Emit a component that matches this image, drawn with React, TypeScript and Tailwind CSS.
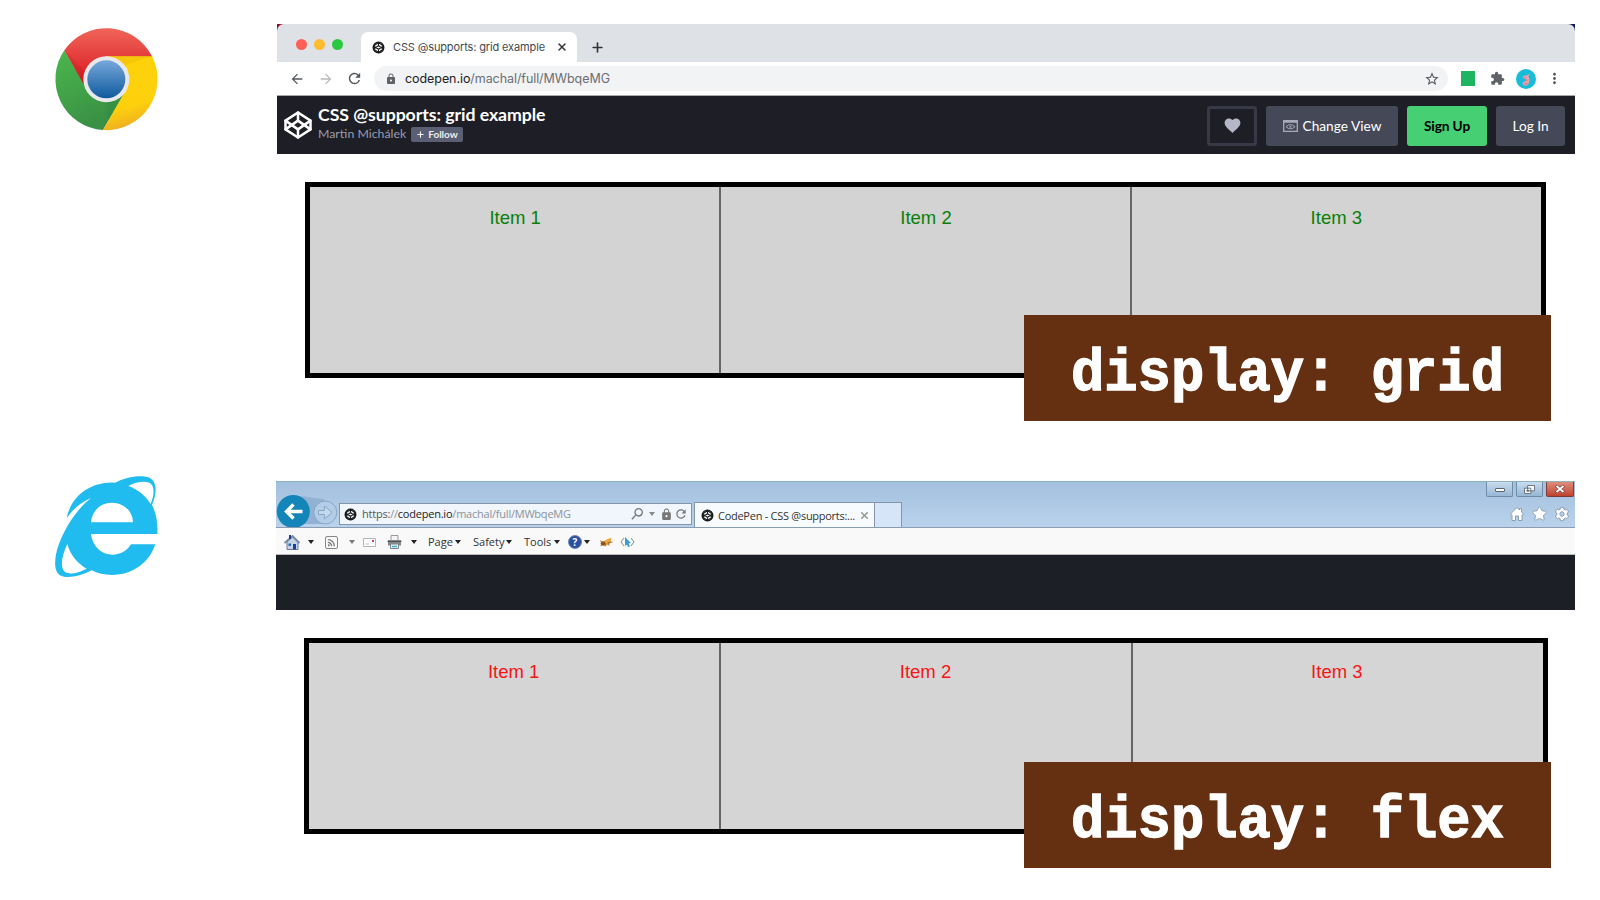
import type { ReactNode } from "react";
import { Codepen, Plus, X } from "lucide-react";
import { FaCog, FaStar } from "react-icons/fa";
import {
  MdArrowBack,
  MdArrowForward,
  MdExtension,
  MdFavorite,
  MdLock,
  MdMoreVert,
  MdRefresh,
  MdRssFeed,
  MdSearch,
  MdStarBorder,
} from "react-icons/md";

function ChromeLogo() {
  return (
    <svg viewBox="0 0 390 390" className="block size-[130px]">
      <defs>
        <linearGradient id="red" x1="0" y1="0" x2="0" y2="1">
          <stop offset="0" stopColor="#f0655a" />
          <stop offset="1" stopColor="#d9161f" />
        </linearGradient>
        <linearGradient id="green" x1="0" y1="0" x2="0.4" y2="1">
          <stop offset="0" stopColor="#4cb74c" />
          <stop offset="1" stopColor="#389044" />
        </linearGradient>
        <linearGradient id="yellow" x1="0" y1="0" x2="0.2" y2="1">
          <stop offset="0.1" stopColor="#fdd20a" />
          <stop offset="0.75" stopColor="#fdd00c" />
          <stop offset="1" stopColor="#efb022" />
        </linearGradient>
        <linearGradient id="blue" x1="0" y1="0" x2="0" y2="1">
          <stop offset="0" stopColor="#77a8dc" />
          <stop offset="1" stopColor="#0f5a9c" />
        </linearGradient>
      </defs>
      <path d="M73 106 A153 153 0 0 0 189 345 L260 222 L131 205 Z" fill="url(#green)" />
      <path d="M336 123 A153 153 0 0 1 189 345 L252 235 L262 160 L199 123 Z" fill="url(#yellow)" />
      <path d="M73 106 A153 153 0 0 1 336 124 L199 124 L131 208 Z" fill="url(#red)" />
      <path d="M210 124 H336 L258 149 Z" fill="#ecb80c" opacity="0.45" />
      <path d="M199 260 L252 236 L205 318 Z" fill="#2c7c3a" opacity="0.2" />
      <path d="M73 106 L131 208 L136 172 Z" fill="#b00f1c" opacity="0.2" />
      <circle cx="199" cy="193" r="69" fill="#e9e9ec" />
      <circle cx="199" cy="193" r="57" fill="url(#blue)" />
    </svg>
  );
}

function ExplorerLogo() {
  return (
    <svg viewBox="0 0 390 390" className="block size-[130px]">
      <path
        fill="#20bcef"
        fillRule="evenodd"
        d="M352 222 H153 C157 260 185 284 217 284 C242 284 262 272 273 253 H346 C328 308 278 345 216 345 C193 345 172 340 155 331 C125 347 95 353 72 350 C45 345 42 318 48 283 C58 232 100 155 153 114 C120 128 98 150 80 174 C93 110 150 64 225 68 C255 52 300 43 325 52 C352 62 352 98 336 135 C349 160 354 190 352 222 Z
        M153 187 C155 155 180 128 215 128 C250 128 278 152 279 187 Z
        M265 78 C295 63 325 61 336 75 C344 88 341 110 332 132 C315 105 292 88 265 78 Z
        M82 252 C90 282 110 309 140 326 C110 342 82 345 71 332 C60 315 67 285 82 252 Z"
      />
    </svg>
  );
}

function Favicon() {
  return (
    <svg viewBox="0 0 13 13" className="size-[13px] shrink-0 text-[#1a1a1a]">
      <circle cx="6.500" cy="6.500" r="5.300" fill="none" stroke="currentColor" strokeWidth="1.300" />
      <path
        d="M6.500 1.500 L11.500 5 V8 L6.500 11.500 L1.500 8 V5 Z M1.500 5 L6.500 8.300 L11.500 5 M1.500 8 L6.500 4.700 L11.500 8 M6.500 1.500 V4.700 M6.500 8.300 V11.500"
        fill="none"
        stroke="currentColor"
        strokeWidth="1.100"
      />
    </svg>
  );
}

function Cells({ look }: { look: string }) {
  return (
    <div className={`grid h-full w-full grid-cols-3 border-[5px] border-black text-center text-[18.5px] leading-[23px] ${look}`}>
      <div>Item 1</div>
      <div className="-ml-px border-l-2 border-[#666]">Item 2</div>
      <div className="-ml-px border-l-2 border-[#666]">Item 3</div>
    </div>
  );
}

function Label({ children }: { children: ReactNode }) {
  return (
    <div className="flex h-[106px] w-[527px] items-center justify-center bg-[#643011] pt-[13px] text-white">
      <span
        className="block origin-center scale-y-[1.08] font-['Liberation_Mono',monospace] text-[55.5px] leading-none font-bold whitespace-pre"
        style={{ WebkitTextStroke: "1.2px white" }}
      >
        {children}
      </span>
    </div>
  );
}

function Center({ w, children }: { w: string; children?: ReactNode }) {
  return <div className={`flex shrink-0 items-center justify-center ${w}`}>{children}</div>;
}

function Caret({ className = "text-[#222]" }: { className?: string }) {
  return (
    <svg viewBox="0 0 6 4" className={`h-1 w-1.5 shrink-0 ${className}`}>
      <path d="M0 0 H6 L3 4 Z" fill="currentColor" />
    </svg>
  );
}

function ChromeWindow() {
  return (
    <div className="h-[130px] w-[1298px] bg-gradient-to-r from-[#8a1230] to-[#101c58]">
      <div className="flex h-[38px] items-end rounded-t-[7px] bg-[#dee1e6]">
        <div className="flex h-full w-[84px] shrink-0 items-center gap-[7px] pt-[2px] pl-[19px]">
          <span className="size-[11px] rounded-full bg-[#ff5f57]" />
          <span className="size-[11px] rounded-full bg-[#febc2e]" />
          <span className="size-[11px] rounded-full bg-[#28c840]" />
        </div>
        <div className="flex h-[30px] w-[216px] shrink-0 items-center rounded-t-[7px] bg-white pl-[11px]">
          <Favicon />
          <span className="ml-2 w-[163px] font-['Inter',sans-serif] text-[11px] tracking-[-0.13px] whitespace-nowrap text-[#45494d]">
            CSS @supports: grid example
          </span>
          <X size={12} strokeWidth={3} className="shrink-0 text-[#333]" />
        </div>
        <Center w="w-[40px] h-[30px]">
          <Plus size={15} strokeWidth={2.6} className="text-[#333]" />
        </Center>
      </div>
      <div className="flex h-[34px] items-center border-b border-[#aaa] bg-white">
        <Center w="w-[40px]">
          <MdArrowBack size={16} className="text-[#55595e]" />
        </Center>
        <Center w="w-[18px]">
          <MdArrowForward size={16} className="shrink-0 text-[#b9bbbe]" />
        </Center>
        <Center w="w-[39px]">
          <MdRefresh size={17} className="text-[#55595e]" />
        </Center>
        <div className="flex h-[25px] w-[1074px] shrink-0 items-center rounded-full bg-[#f1f3f4] pr-2 pl-[11px]">
          <MdLock size={12} className="text-[#5f6368]" />
          <span className="ml-[8px] flex-1 pt-px font-['Inter',sans-serif] text-[12.5px] tracking-[-0.07px] text-[#6b6f73]">
            <span className="text-[#222]">codepen.io</span>/machal/full/MWbqeMG
          </span>
          <MdStarBorder size={16} className="text-[#55595e]" />
        </div>
        <Center w="w-[40px]">
          <span className="size-[14.5px] bg-[#1db560]" />
        </Center>
        <Center w="w-[18px]">
          <MdExtension size={15} className="text-[#5f6368]" />
        </Center>
        <Center w="w-[39px]">
          <svg viewBox="0 0 20 20" className="size-5">
            <circle cx="10" cy="10" r="10" fill="#16bcd8" />
            <path d="M8 16.5 C5.5 14.5 6.5 13 9 12.5 L11 10.5 C8.5 10.5 6.500 9.500 7 7.500 C8.500 6 9.500 6.500 10.500 6.500 L14.500 4.500 L12.200 7.500 C14 9.500 13.500 12 12.800 13.500 C12.500 16 10.500 17 8 16.500 Z" fill="#f0a0a8" />
            <path d="M8 8.500 L10 9 M10.500 12 L12 10.500 M8.500 15 L11.500 14.500" stroke="#d9606d" strokeWidth="0.800" />
          </svg>
        </Center>
        <Center w="w-[18px]">
          <MdMoreVert size={17} className="shrink-0 text-[#55595e]" />
        </Center>
      </div>
      <div className="flex h-[58px] items-center bg-[#1e1f26] pr-[10px] pl-[6px] font-['Lato',sans-serif] text-white">
        <Codepen size={30} strokeWidth={2} className="shrink-0" />
        <div className="-mt-[2px] ml-[5px] flex-1">
          <div className="text-[17.7px] leading-[20px] font-bold tracking-[-0.06px]">CSS @supports: grid example</div>
          <div className="flex items-center text-[12.3px] leading-[18px] text-[#9a9caf]">
            Martin Michálek
            <span className="ml-[5px] flex h-[15px] w-[52px] items-center rounded-[2px] bg-[#5a5f73] pl-[5px] text-[10px] font-bold text-[#eee]">
              <Plus size={9} strokeWidth={3} className="mr-[3px]" />
              Follow
            </span>
          </div>
        </div>
        <div className="mt-px flex h-[40px] gap-[9px] text-[13.7px]">
          <div className="flex w-[50px] items-center justify-center rounded-[3px] border-[3px] border-[#373946]">
            <MdFavorite size={19} className="text-[#b5b7c6]" />
          </div>
          <div className="flex w-[132px] items-center justify-center gap-[5px] rounded-[3px] bg-[#444857]">
            <svg viewBox="0 0 15 12" className="h-3 w-[15px]">
              <path d="M0.700 0.700 H14.300 V11.300 H0.700 Z M0.700 2 H14.300" fill="none" stroke="#a9abb9" strokeWidth="1.300" />
              <path d="M3 6.700 Q7.500 2.500 12 6.700 Q7.500 11 3 6.700 Z" fill="none" stroke="#a9abb9" />
              <circle cx="7.500" cy="6.700" r="1" fill="#a9abb9" />
            </svg>
            <span className="pt-px">Change View</span>
          </div>
          <div className="flex w-[80px] items-center justify-center rounded-[3px] bg-[#47cf73] pt-px font-bold tracking-[-0.1px] text-black">
            Sign Up
          </div>
          <div className="flex w-[69px] items-center justify-center rounded-[3px] bg-[#444857] pt-px">Log In</div>
        </div>
      </div>
    </div>
  );
}

function ExplorerWindow() {
  return (
    <div className="w-[1299px] font-['Open_Sans',sans-serif] text-[11px] text-[#333]">
      <div className="flex h-[47px] items-end overflow-hidden border-t border-b border-t-[#8fb0bd] border-b-[#8a9cb0] bg-gradient-to-b from-[#a3c0de] to-[#bad2ec]">
        <svg viewBox="0 0 63 34" className="h-[34px] w-[63px] shrink-0">
          <path d="M20 3 C34 3 38 6 48 6 V31 H20 Z" fill="#91b2d3" />
          <circle cx="17.300" cy="18.500" r="16.500" fill="#1385b8" />
          <path d="M26.500 18.500 H10 M17.500 11.500 L10.500 18.500 L17.500 25.500" fill="none" stroke="white" strokeWidth="3.400" />
          <circle cx="49.300" cy="19.500" r="11.500" fill="#b3cde8" stroke="#8aa5c4" />
          <path d="M42.500 17.500 H48.500 V13 L56 19.500 L48.500 26 V21.500 H42.500 Z" fill="#c5d9ee" stroke="#8aa5c4" />
        </svg>
        <div className="mb-[2px] flex h-[22px] w-[353px] shrink-0 items-center border border-[#8396aa] bg-[#f0f6fc] pl-[4px] text-[#999]">
          <Favicon />
          <span className="ml-[5px] w-[264px] pt-px tracking-[-0.22px] whitespace-nowrap text-[#8c9298]">
            <span className="text-[#555]">https:</span>//<span className="text-[#222]">codepen.io</span>/machal/full/MWbqeMG
          </span>
          <Center w="w-[22px]">
            <MdSearch size={16} className="-scale-x-100 text-[#777]" />
          </Center>
          <Center w="w-[8px]">
            <Caret className="text-[#888]" />
          </Center>
          <Center w="w-[20px]">
            <MdLock size={13} className="text-[#777]" />
          </Center>
          <Center w="w-[9px]">
            <MdRefresh size={14} className="shrink-0 text-[#777]" />
          </Center>
        </div>
        <div className="ml-[2px] flex h-[25px] w-[181px] shrink-0 items-center border border-b-0 border-[#8396aa] bg-[#f8fbfe] pl-[6px]">
          <Favicon />
          <span className="ml-1 w-[141px] pt-[2px] tracking-[-0.27px] whitespace-nowrap">CodePen - CSS @supports:...</span>
          <X size={11} strokeWidth={3.5} className="shrink-0 text-[#999]" />
        </div>
        <div className="h-[25px] w-[27px] shrink-0 border border-b-0 border-l-0 border-[#8396aa] bg-[#d6e6f8]" />
        <div className="flex h-full flex-1 flex-col items-end">
          <div className="flex h-[15px] gap-[3px] pr-px">
            <div className="flex w-[27px] items-center justify-center rounded-b-[2px] border border-t-0 border-[#6f8ba8] bg-gradient-to-b from-[#c9dcef] to-[#97b7d4]">
              <span className="mt-[2px] h-[4px] w-[10px] rounded-[1px] border border-[#5b6673] bg-white" />
            </div>
            <div className="flex w-[27px] items-center justify-center rounded-b-[2px] border border-t-0 border-[#6f8ba8] bg-gradient-to-b from-[#c9dcef] to-[#97b7d4]">
              <svg viewBox="0 0 12 10" className="h-[9px] w-[11px]">
                <path d="M4 0.500 H11.500 V6.500 H4 Z M0.500 3.500 H7.500 V9.500 H0.500 Z" fill="white" stroke="#5b6673" />
                <path d="M3 6 H5 V7 H3 Z" fill="none" stroke="#5b6673" />
              </svg>
            </div>
            <div className="flex w-[28px] items-center justify-center rounded-b-[2px] border border-t-0 border-[#7c3a38] bg-gradient-to-b from-[#dc8d7d] to-[#c1412b]">
              <svg viewBox="0 0 10 8" className="h-2 w-2.5">
                <path d="M1 0.500 L9 7.500 M9 0.500 L1 7.500" stroke="#714040" strokeWidth="3" />
                <path d="M1.500 1 L8.500 7 M8.500 1 L1.500 7" stroke="white" strokeWidth="1.800" />
              </svg>
            </div>
          </div>
          <div className="flex flex-1 items-center gap-[8px] pt-[3px] pr-[6px] text-white">
            <svg viewBox="0 0 14 14" className="size-[14px] overflow-visible">
              <path
                d="M7 0.500 L9.500 3 V1.500 H11.500 V5 L13.500 7 L12.500 8.200 L12 7.800 V13.500 H8.500 V9 H5.500 V13.500 H2 V7.800 L1.500 8.200 L0.500 7 Z"
                fill="white"
                stroke="#8496ab"
                strokeWidth="0.900"
              />
            </svg>
            <FaStar size={15} stroke="#8496ab" strokeWidth={32} className="overflow-visible" />
            <FaCog size={14} stroke="#8496ab" strokeWidth={34} className="overflow-visible" />
          </div>
        </div>
      </div>
      <div className="flex h-[27px] items-center border-b border-[#bbb] bg-[#f9f9f9] pt-[2px] pl-[7px]">
        <Center w="w-[17px]">
          <svg viewBox="0 0 16 15" className="h-[15px] w-4">
            <path d="M3 7 V14.500 H14 V7 L8.500 2 Z" fill="#c5d4e6" stroke="#6d7c96" />
            <path d="M0.500 8 L8.500 1 L15.500 8" fill="none" stroke="#7788a5" strokeWidth="1.800" />
            <path d="M5 0 H7 V4 H5 Z M9 9 H12 V14.500 H9 Z" fill="#1b3e9b" />
            <path d="M4.500 8.500 H7 V11 H4.500 Z" fill="#2a6bbd" />
          </svg>
        </Center>
        <Center w="w-[21px]"><Caret /></Center>
        <Center w="w-[20px]">
          <span className="rounded-[2px] border border-[#888]">
            <MdRssFeed size={11} className="text-[#777]" />
          </span>
        </Center>
        <Center w="w-[21px]"><Caret className="text-[#777]" /></Center>
        <Center w="w-[15px]">
          <svg viewBox="0 0 13 9" className="h-[9px] w-[13px]">
            <path d="M0.500 0.500 H12.500 V8.500 H0.500 Z" fill="#fff" stroke="#b5b5b5" />
            <path d="M9 2 H11 V4 H9 Z" fill="#d6455d" />
            <path d="M2.500 6 H6" stroke="#bbb" />
          </svg>
        </Center>
        <Center w="w-[35px]">
          <svg viewBox="0 0 15 14" className="h-[14px] w-[15px]">
            <path d="M4 0.500 H11 V6 H4 Z" fill="#f4f4f4" stroke="#999" />
            <path d="M1 5 H14 V10.500 H1 Z" fill="#85898d" />
            <path d="M0.500 6.500 H14.500" stroke="#4d5257" />
            <path d="M3.500 9 H11.500 V13.500 H3.500 Z" fill="#e8f2f5" stroke="#7c8589" />
            <path d="M5 11.500 H10" stroke="#48b1c7" strokeWidth="1.500" />
          </svg>
        </Center>
        <Center w="w-[4px]"><Caret /></Center>
        <span className="ml-[12px] w-[27px]">Page</span>
        <Caret />
        <span className="ml-[12px] w-[33px]">Safety</span>
        <Caret />
        <span className="ml-[12px] w-[30px]">Tools</span>
        <Caret />
        <div className="ml-[8px] flex size-[14px] items-center justify-center rounded-full border border-[#7888ad] bg-[#284fa3] text-[10px] leading-none font-bold text-white">
          ?
        </div>
        <div className="ml-[2px]"><Caret /></div>
        <svg viewBox="0 0 14 12" className="ml-[9px] h-3 w-3.5">
          <path d="M4 7 C5 4 8 3.500 12.500 1.500 L11.500 7 C9 10 6 10.500 4 7 Z" fill="#eda73c" />
          <circle cx="4" cy="7.500" r="2.300" fill="#8a4f1a" />
          <path d="M1 4.500 L4 7 L1.500 10 M6 10.500 L7 7 M10 9.500 L9 6.500 L13.500 6" fill="none" stroke="#9c6428" strokeWidth="0.900" />
        </svg>
        <svg viewBox="0 0 15 10" className="ml-[7px] h-[10px] w-[15px]">
          <path d="M4 1 L1 5 L4 9 M11 1 L14 5 L11 9" fill="none" stroke="#888" />
          <path d="M5 0 L11 6 L8.500 6.500 L10 9.500 L8 10 L7 7.500 L5 9 Z" fill="#3b9cd5" />
        </svg>
      </div>
      <div className="h-[54.5px] bg-[#1d1f27]" />
    </div>
  );
}

export default function App() {
  return (
    <div className="relative h-[900px] w-[1600px] overflow-hidden bg-white font-['Liberation_Sans',Arial,sans-serif]">
      <section className="flex h-[481px]">
        <div className="w-[277px] shrink-0 pt-[15px] pl-[40px]">
          <ChromeLogo />
        </div>
        <div className="pt-[24px]">
          <ChromeWindow />
          <div className="mt-[28px] ml-[28px] h-[196px] w-[1241px]">
            <Cells look="text-[#088008] bg-[#d3d3d3] *:pt-[19px]" />
          </div>
        </div>
      </section>
      <section className="flex h-[419px]">
        <div className="w-[276px] shrink-0 pl-[40px]">
          <div className="-mt-[21px]">
            <ExplorerLogo />
          </div>
        </div>
        <div>
          <ExplorerWindow />
          <div className="mt-[28.5px] ml-[28px] h-[196px] w-[1244px]">
            <Cells look="text-[#f51616] bg-[#d5d5d5] *:pt-[17px] *:pr-[2px]" />
          </div>
        </div>
      </section>
      <div className="absolute top-[315px] left-[1024px]">
        <Label>display: grid</Label>
      </div>
      <div className="absolute top-[762px] left-[1024px]">
        <Label>display: flex</Label>
      </div>
    </div>
  );
}
